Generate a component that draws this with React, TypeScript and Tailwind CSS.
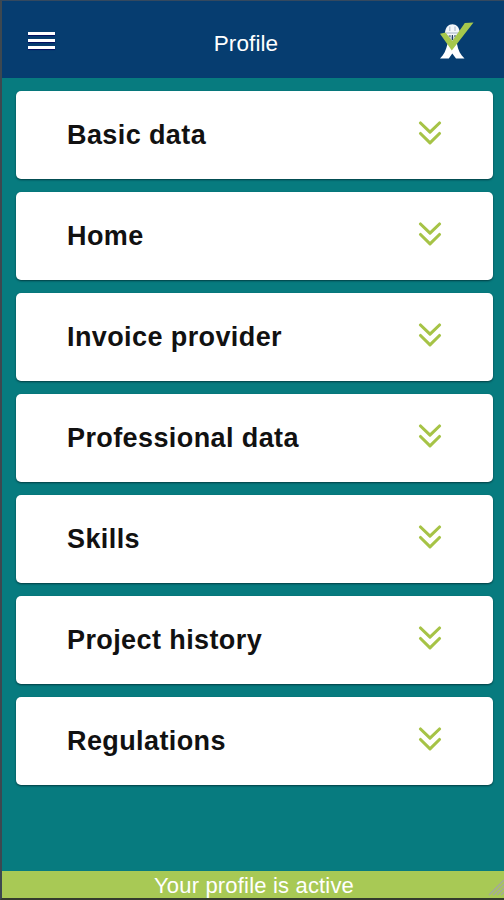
import React from 'react';

const SECTIONS = [
  'Basic data',
  'Home',
  'Invoice provider',
  'Professional data',
  'Skills',
  'Project history',
  'Regulations',
];

// Worker in a hard hat with a check mark across the body
const Logo = () => (
  <svg className="w-[34px] h-[38px]" viewBox="0 0 34 38" fill="none">
    <path d="M0 36.5 C4 33 6 28 7.5 22 H17 C18 28 20.5 33 24.5 36.5 H16 L12.3 31.5 L8.8 36.5 Z" fill="#fff" />
    <path d="M6 11 H18.8 V16 L15.5 21.5 H9.5 L6 16 Z" fill="#c3d0dd" />
    <path d="M5 12 C4.5 -1 20.3 -1 19.8 12 L18 14.5 H7 Z" fill="#f4f7fa" />
    <path d="M9.8 4.5 V9 M15 4.5 V9 M6 11 H19" stroke="#a3b4c7" strokeWidth="1" />
    <path d="M12.4 13 V18 M8.7 14 H10.8 M14 14 H16" stroke="#23405f" strokeWidth="1.2" />
    <path d="M0 11.8 L5.5 10.6 L12.3 19 L24.8 0.9 L33.5 0.4 L11.8 28.6 Z" fill="#a6c84c" />
  </svg>
);

const DoubleChevron = () => (
  <svg className="w-6 h-6" viewBox="0 0 24 24" fill="none" stroke="#a6c346" strokeWidth="3.1" strokeLinecap="round" strokeLinejoin="round">
    <path d="M2.5 2 L12 11.2 L21.5 2" />
    <path d="M2.5 12.5 L12 21.8 L21.5 12.5" />
  </svg>
);

const App: React.FC = () => {
  return (
    <div className="h-[900px] flex flex-col bg-[#077b7f] border-t border-l-2 border-b-2 border-t-[#34495f] border-l-[#3d4850] border-b-[#343b2d] font-['Liberation_Sans',Arial,sans-serif]">
      {/* Header */}
      <header className="h-[77px] shrink-0 flex items-center justify-between bg-[#063d70] pl-[26px] pr-[30px] pt-0.5">
        <button className="flex flex-col gap-[4px] w-[27px]" aria-label="Menu">
          <span className="h-[3px] w-full bg-white shadow-[0_1px_1px_#040c60]" />
          <span className="h-[3px] w-full bg-white shadow-[0_1px_1px_#040c60]" />
          <span className="h-[3px] w-full bg-white shadow-[0_1px_1px_#040c60]" />
        </button>
        <h1 className="text-[22.5px] leading-7 tracking-[0.1px] text-white pt-[6px] mr-[3px]">Profile</h1>
        <Logo />
      </header>

      {/* Sections */}
      <main className="flex-1 flex flex-col gap-[13.5px] pt-[13px] pl-[13.5px] pr-[11.5px]">
        {SECTIONS.map((name) => (
          <button
            key={name}
            className="h-[87.5px] shrink-0 flex items-center justify-between bg-white rounded-[5px] pl-[51.5px] pr-[51px] shadow-[0_1px_2px_rgba(0,40,45,0.75)]"
          >
            <span className="text-[27px] leading-8 font-bold tracking-[0.4px] text-[#111] pt-px">{name}</span>
            <span className="pb-[3px]">
              <DoubleChevron />
            </span>
          </button>
        ))}
      </main>

      {/* Status bar */}
      <footer className="relative h-[27px] shrink-0 bg-[#a8c955] text-white text-[22px] leading-[29px] tracking-[0.18px] pl-0.5 text-center">
        Your profile is active
        <svg className="absolute right-0 bottom-0 w-4 h-5" viewBox="0 0 16 20" stroke="#a3a99a" strokeWidth="1.5">
          <path d="M1 17 L16 2 M5 17 L16 6 M9 17 L16 10 M13 17 L16 14" />
        </svg>
      </footer>
    </div>
  );
};

export default App;
